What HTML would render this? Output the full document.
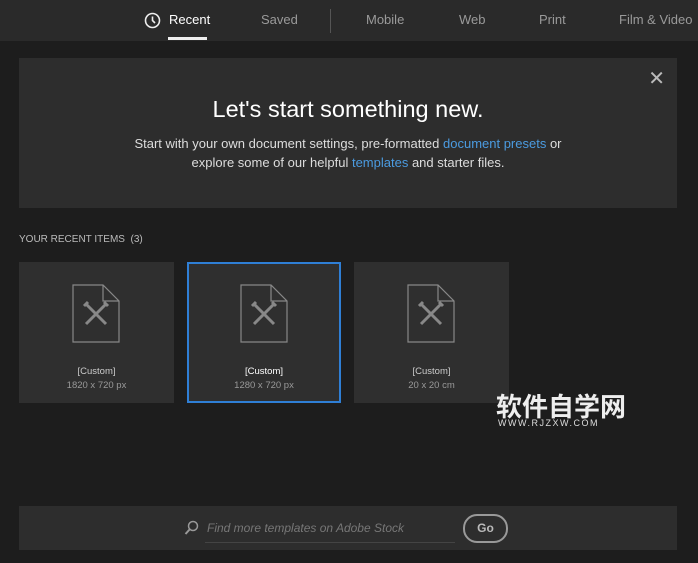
<!DOCTYPE html><html><head><style>
body{margin:0;width:698px;height:563px;background:#1d1d1d;font-family:"Liberation Sans",sans-serif;position:relative;overflow:hidden;color:#ddd}
.top{position:absolute;left:0;top:0;width:698px;height:41px;background:#2a2a2a}
.tab{position:absolute;top:12px;font-size:13px;color:#9a9a9a}
.hero{position:absolute;left:19px;top:58px;width:658px;height:150px;background:#2d2d2d}
.card{position:absolute;top:262px;width:155px;height:141px;background:#2f2f2f;box-sizing:border-box;text-align:center}
.card .t{position:absolute;top:104px;width:100%;font-size:9.5px;color:#ccc}
.card .s{position:absolute;top:118px;width:100%;font-size:9.5px;color:#999}
.card svg{position:absolute;left:53px;top:22px}
a{color:#4b9be0;text-decoration:none}
</style></head><body>
<div class="top">
<svg style="position:absolute;left:144px;top:12px" width="17" height="17" viewBox="0 0 17 17"><circle cx="8.5" cy="8.5" r="7" fill="none" stroke="#eee" stroke-width="1.6"/><path d="M8.5 4.5V8.5L11 11" fill="none" stroke="#eee" stroke-width="1.6"/></svg>
<div class="tab" style="left:169px;color:#fff">Recent</div>
<div style="position:absolute;left:168px;top:37px;width:39px;height:3px;background:#eee"></div>
<div class="tab" style="left:261px">Saved</div>
<div style="position:absolute;left:330px;top:9px;width:1px;height:24px;background:#555"></div>
<div class="tab" style="left:366px">Mobile</div>
<div class="tab" style="left:459px">Web</div>
<div class="tab" style="left:539px">Print</div>
<div class="tab" style="left:619px">Film &amp; Video</div>
</div>
<div class="hero">
<div style="position:absolute;right:12px;top:8px;font-size:20px;color:#bbb">✕</div>
<div style="position:absolute;top:38px;width:100%;text-align:center;font-size:23.5px;color:#fff">Let's start something new.</div>
<div style="position:absolute;top:76px;width:100%;text-align:center;font-size:13px;line-height:19px;color:#ddd">Start with your own document settings, pre-formatted <a>document presets</a> or<br>explore some of our helpful <a>templates</a> and starter files.</div>
</div>
<div style="position:absolute;left:19px;top:234px;font-size:10px;color:#bbb">YOUR RECENT ITEMS &nbsp;(3)</div>
<div class="card" style="left:19px"><svg width="50" height="60" viewBox="0 0 50 60"><path d="M1 1H31L47 17V58H1Z M31 1V17H47" fill="none" stroke="#888" stroke-width="1.2"/><path d="M14 20L34 40M34 20L14 40M12 22L16 18M36 22L32 18" fill="none" stroke="#888" stroke-width="3"/></svg><div class="t">[Custom]</div><div class="s">1820 x 720 px</div></div>
<div class="card" style="left:187px;width:154px;border:2px solid #2f7fd6"><svg style="left:51px;top:20px" width="50" height="60" viewBox="0 0 50 60"><path d="M1 1H31L47 17V58H1Z M31 1V17H47" fill="none" stroke="#888" stroke-width="1.2"/><path d="M14 20L34 40M34 20L14 40M12 22L16 18M36 22L32 18" fill="none" stroke="#888" stroke-width="3"/></svg><div class="t" style="top:102px;color:#fff">[Custom]</div><div class="s" style="top:116px">1280 x 720 px</div></div>
<div class="card" style="left:354px"><svg width="50" height="60" viewBox="0 0 50 60"><path d="M1 1H31L47 17V58H1Z M31 1V17H47" fill="none" stroke="#888" stroke-width="1.2"/><path d="M14 20L34 40M34 20L14 40M12 22L16 18M36 22L32 18" fill="none" stroke="#888" stroke-width="3"/></svg><div class="t">[Custom]</div><div class="s">20 x 20 cm</div></div>
<div style="position:absolute;left:496px;top:391px;font-family:'Noto Sans CJK SC',sans-serif;font-size:26px;font-weight:bold;color:#eee;line-height:30px">软件自学网</div>
<div style="position:absolute;left:498px;top:418px;font-size:9px;letter-spacing:1.5px;color:#ddd">WWW.RJZXW.COM</div>
<div style="position:absolute;left:19px;top:506px;width:658px;height:44px;background:#2d2d2d">
<svg style="position:absolute;left:165px;top:14px" width="16" height="16" viewBox="0 0 16 16"><circle cx="9" cy="6" r="4.5" fill="none" stroke="#999" stroke-width="1.5"/><path d="M6 9L1.5 14" stroke="#999" stroke-width="2"/></svg>
<div style="position:absolute;left:188px;top:15px;font-size:12px;font-style:italic;color:#777">Find more templates on Adobe Stock</div>
<div style="position:absolute;left:186px;top:36px;width:250px;height:1px;background:#444"></div>
<div style="position:absolute;left:444px;top:8px;width:41px;height:25px;border:2px solid #999;border-radius:14px;text-align:center;line-height:25px;font-size:12px;font-weight:bold;color:#bbb">Go</div>
</div>
</body></html>
